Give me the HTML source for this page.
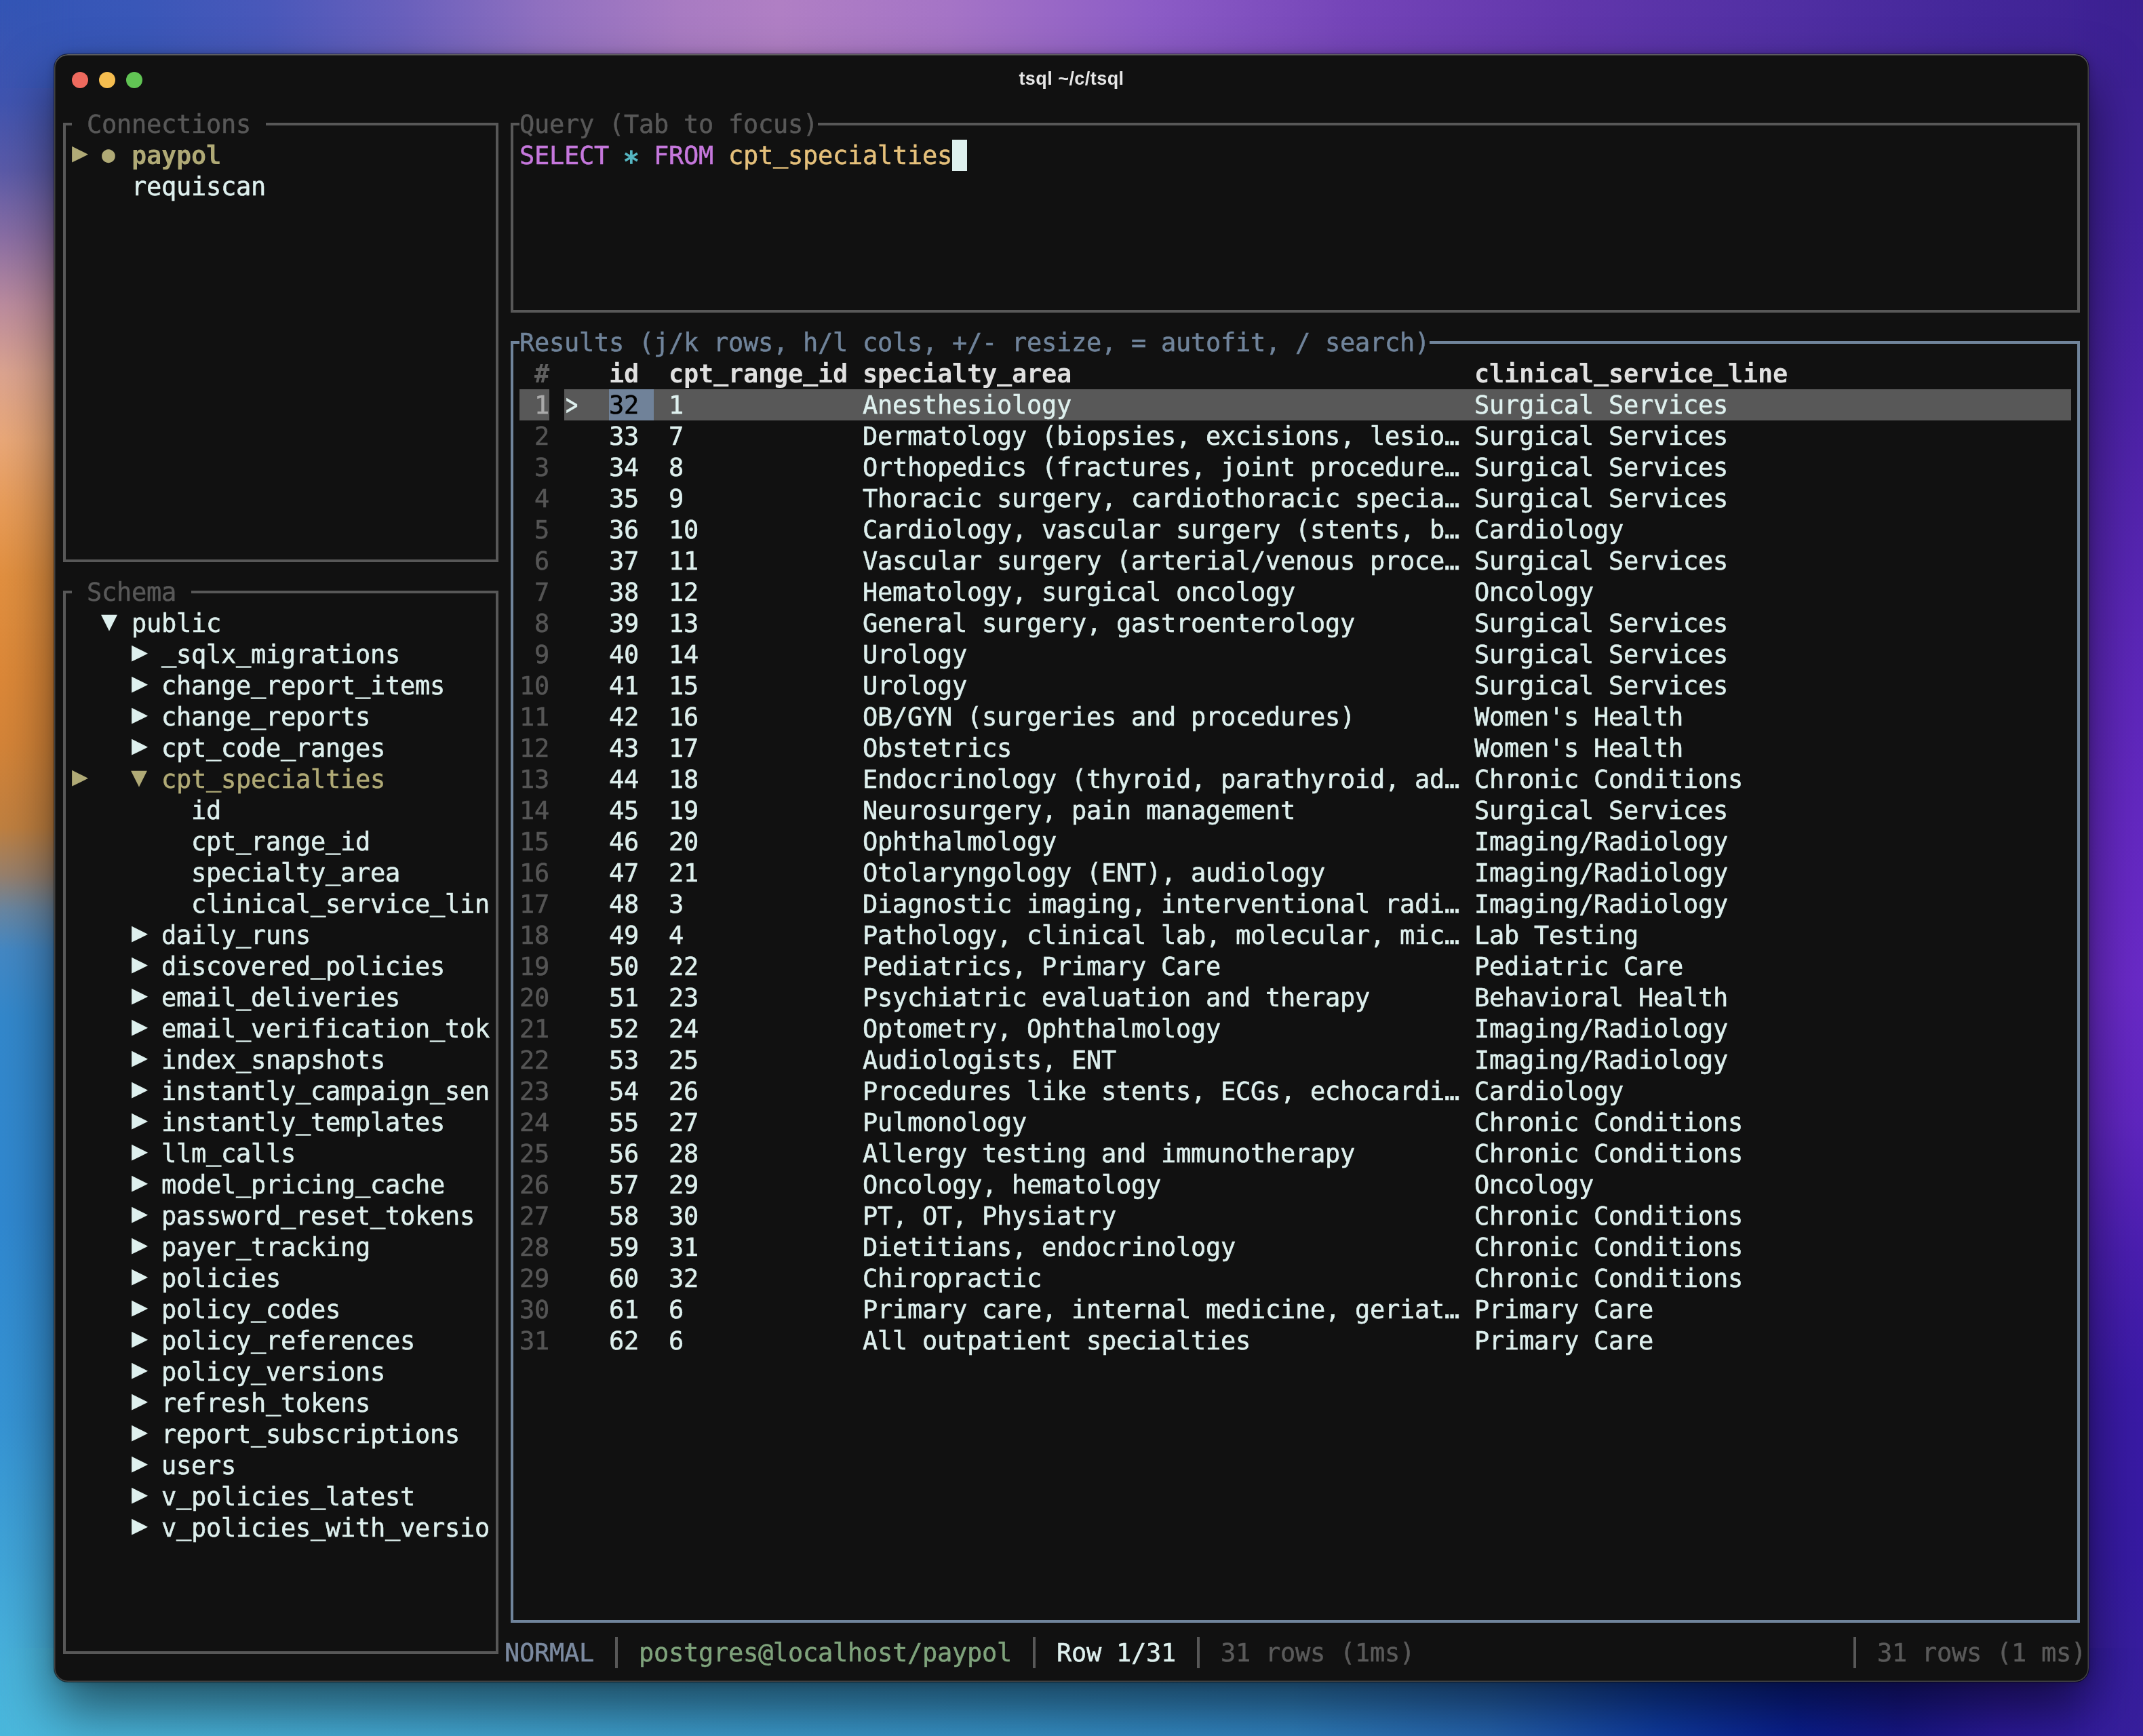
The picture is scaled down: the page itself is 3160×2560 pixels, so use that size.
<!DOCTYPE html>
<html lang="en"><head><meta charset="utf-8"><title>tsql ~/c/tsql</title>
<style>
html,body{margin:0;padding:0}
body{width:3160px;height:2560px;overflow:hidden;position:relative;background:#3a2a9a}
.bg{position:absolute}
#bl{left:0;top:0;width:130px;height:2560px;background:linear-gradient(180deg,#3355b5 0px,#4054b0 150px,#5a5aa8 250px,#8a6ea4 350px,#bc8c9e 450px,#dca490 550px,#eaa878 650px,#e89c58 750px,#e29040 850px,#dc8838 1000px,#d48438 1100px,#c08040 1220px,#98806c 1290px,#6a86a0 1340px,#4488c4 1400px,#3388cc 1500px,#3088d0 1800px,#3694d4 2100px,#40a4d8 2300px,#48b2dc 2450px,#4bb8dc 2560px)}
#br{left:3030px;top:0;width:130px;height:2560px;background:linear-gradient(180deg,#3c2092 0px,#40209a 300px,#4c22a6 600px,#5a26b6 900px,#6428c2 1200px,#6a2ac8 1450px,#6026c0 1650px,#4a1eb0 1850px,#3a1aa6 2050px,#361aa2 2300px,#38209c 2560px)}
#bt{left:0;top:0;width:3160px;height:130px;background:linear-gradient(90deg,#3355b5 0px,#3957b8 200px,#4a58ba 400px,#6a60bc 600px,#9070c0 800px,#a87bc2 1000px,#b07fc4 1150px,#a574c6 1400px,#8c5cc6 1700px,#7444b8 2000px,#6237ac 2300px,#5230a4 2600px,#44279a 2900px,#3c2092 3160px);-webkit-mask-image:linear-gradient(90deg,rgba(0,0,0,0) 0px,#000 110px,#000 3050px,rgba(0,0,0,0) 3160px);mask-image:linear-gradient(90deg,rgba(0,0,0,0) 0px,#000 110px,#000 3050px,rgba(0,0,0,0) 3160px)}
#bb{left:0;top:2430px;width:3160px;height:130px;background:linear-gradient(90deg,#4bb8dc 0px,#45acd6 500px,#3c9ccc 1000px,#3590c6 1500px,#2f80be 1900px,#2462ae 2200px,#0e3aa0 2450px,#0a1e8e 2650px,#161686 2800px,#2a1896 2950px,#341c9e 3160px);-webkit-mask-image:linear-gradient(90deg,rgba(0,0,0,0) 0px,#000 110px,#000 3050px,rgba(0,0,0,0) 3160px);mask-image:linear-gradient(90deg,rgba(0,0,0,0) 0px,#000 110px,#000 3050px,rgba(0,0,0,0) 3160px)}
#win{position:absolute;left:80px;top:80px;width:3000px;height:2400px;background:#111111;border-radius:20px;
 box-shadow:0 0 0 1px rgba(0,0,0,.55), 0 0 16px rgba(0,0,0,.22), 0 40px 80px 0 rgba(0,0,0,.55);overflow:hidden;will-change:transform}
#win:after{content:"";position:absolute;left:0;top:0;right:0;bottom:0;border-radius:20px;box-shadow:inset 0 0 0 1.5px rgba(255,255,255,.22), inset 0 1.5px 0 0 rgba(255,255,255,.18);pointer-events:none}
#win i{position:absolute;display:block}
.tl{position:absolute;top:26px;width:24px;height:24px;border-radius:50%}
#title{position:absolute;left:0;width:3000px;top:16px;height:40px;line-height:40px;text-align:center;
 font:bold 27px/40px "Liberation Sans",sans-serif;letter-spacing:.45px;color:#e6e6e6}
.t,.s{position:absolute;white-space:pre;font-family:"DejaVu Sans Mono","Liberation Mono",monospace;font-size:37px;letter-spacing:-0.2764px;
 line-height:46px;height:46px;color:#def0ee;font-kerning:none;font-variant-ligatures:none;-webkit-text-stroke:.5px currentColor}
.b{font-weight:bold;-webkit-text-stroke:0}
.t{margin-top:1px}
.t u{text-decoration:none;position:relative;top:-3px}
.gt{transform:scale(.82,1.2);transform-origin:11px 24px;-webkit-text-stroke:.3px currentColor}
.star{font-size:41px;letter-spacing:0;margin-left:-1.5px;margin-top:10px;-webkit-text-stroke:1.4px currentColor}
.s{width:22px;letter-spacing:0;-webkit-text-stroke:0}
.tr{font-size:39.9px;margin-top:-5px}
.td{font-size:39.9px;margin-top:-4px;margin-left:-1px}
.dot{font-size:33px;margin-top:-1px;margin-left:0px}
</style></head>
<body>
<div class="bg" id="bl"></div><div class="bg" id="br"></div><div class="bg" id="bt"></div><div class="bg" id="bb"></div>
<div id="win">
<div class="tl" style="left:26px;background:#ee6a5e"></div>
<div class="tl" style="left:66px;background:#f5bd4f"></div>
<div class="tl" style="left:106px;background:#61c454"></div>
<div id="title">tsql ~/c/tsql</div>
<i style="left:13px;top:101px;width:4px;height:648px;background:#585858;"></i>
<i style="left:651px;top:101px;width:4px;height:648px;background:#585858;"></i>
<i style="left:13px;top:745px;width:642px;height:4px;background:#585858;"></i>
<i style="left:13px;top:101px;width:13px;height:4px;background:#585858;"></i>
<i style="left:312px;top:101px;width:343px;height:4px;background:#585858;"></i>
<span class="t" style="left:48px;top:80px;color:#585858;">Connections</span>
<i style="left:13px;top:791px;width:4px;height:1568px;background:#585858;"></i>
<i style="left:651px;top:791px;width:4px;height:1568px;background:#585858;"></i>
<i style="left:13px;top:2355px;width:642px;height:4px;background:#585858;"></i>
<i style="left:13px;top:791px;width:13px;height:4px;background:#585858;"></i>
<i style="left:202px;top:791px;width:453px;height:4px;background:#585858;"></i>
<span class="t" style="left:48px;top:770px;color:#585858;">Schema</span>
<i style="left:673px;top:101px;width:4px;height:280px;background:#585858;"></i>
<i style="left:2983px;top:101px;width:4px;height:280px;background:#585858;"></i>
<i style="left:673px;top:377px;width:2314px;height:4px;background:#585858;"></i>
<i style="left:673px;top:101px;width:13px;height:4px;background:#585858;"></i>
<i style="left:1126px;top:101px;width:1861px;height:4px;background:#585858;"></i>
<span class="t" style="left:686px;top:80px;color:#585858;">Query (Tab to focus)</span>
<i style="left:673px;top:423px;width:4px;height:1890px;background:#70849b;"></i>
<i style="left:2983px;top:423px;width:4px;height:1890px;background:#70849b;"></i>
<i style="left:673px;top:2309px;width:2314px;height:4px;background:#70849b;"></i>
<i style="left:673px;top:423px;width:13px;height:4px;background:#70849b;"></i>
<i style="left:2028px;top:423px;width:959px;height:4px;background:#70849b;"></i>
<span class="t" style="left:686px;top:402px;color:#70849b;">Results (j/k rows, h/l cols, +/- resize, = autofit, / search)</span>
<span class="s tr" style="left:26px;top:126px;color:#b0aa76;">▶</span>
<span class="s dot" style="left:70px;top:126px;color:#b0aa76;">●</span>
<span class="t b" style="left:114px;top:126px;color:#b0aa76;">paypol</span>
<span class="t" style="left:114px;top:172px;">requiscan</span>
<span class="t" style="left:114px;top:816px;">public</span>
<span class="s td" style="left:70px;top:816px;">▼</span>
<span class="s tr" style="left:114px;top:862px;">▶</span>
<span class="t" style="left:158px;top:862px;"><u>_</u>sqlx<u>_</u>migrations</span>
<span class="s tr" style="left:114px;top:908px;">▶</span>
<span class="t" style="left:158px;top:908px;">change<u>_</u>report<u>_</u>items</span>
<span class="s tr" style="left:114px;top:954px;">▶</span>
<span class="t" style="left:158px;top:954px;">change<u>_</u>reports</span>
<span class="s tr" style="left:114px;top:1000px;">▶</span>
<span class="t" style="left:158px;top:1000px;">cpt<u>_</u>code<u>_</u>ranges</span>
<span class="s tr" style="left:26px;top:1046px;color:#b0aa76;">▶</span>
<span class="s td" style="left:114px;top:1046px;color:#b0aa76;">▼</span>
<span class="t" style="left:158px;top:1046px;color:#b0aa76;">cpt<u>_</u>specialties</span>
<span class="t" style="left:202px;top:1092px;">id</span>
<span class="t" style="left:202px;top:1138px;">cpt<u>_</u>range<u>_</u>id</span>
<span class="t" style="left:202px;top:1184px;">specialty<u>_</u>area</span>
<span class="t" style="left:202px;top:1230px;">clinical<u>_</u>service<u>_</u>lin</span>
<span class="s tr" style="left:114px;top:1276px;">▶</span>
<span class="t" style="left:158px;top:1276px;">daily<u>_</u>runs</span>
<span class="s tr" style="left:114px;top:1322px;">▶</span>
<span class="t" style="left:158px;top:1322px;">discovered<u>_</u>policies</span>
<span class="s tr" style="left:114px;top:1368px;">▶</span>
<span class="t" style="left:158px;top:1368px;">email<u>_</u>deliveries</span>
<span class="s tr" style="left:114px;top:1414px;">▶</span>
<span class="t" style="left:158px;top:1414px;">email<u>_</u>verification<u>_</u>tok</span>
<span class="s tr" style="left:114px;top:1460px;">▶</span>
<span class="t" style="left:158px;top:1460px;">index<u>_</u>snapshots</span>
<span class="s tr" style="left:114px;top:1506px;">▶</span>
<span class="t" style="left:158px;top:1506px;">instantly<u>_</u>campaign<u>_</u>sen</span>
<span class="s tr" style="left:114px;top:1552px;">▶</span>
<span class="t" style="left:158px;top:1552px;">instantly<u>_</u>templates</span>
<span class="s tr" style="left:114px;top:1598px;">▶</span>
<span class="t" style="left:158px;top:1598px;">llm<u>_</u>calls</span>
<span class="s tr" style="left:114px;top:1644px;">▶</span>
<span class="t" style="left:158px;top:1644px;">model<u>_</u>pricing<u>_</u>cache</span>
<span class="s tr" style="left:114px;top:1690px;">▶</span>
<span class="t" style="left:158px;top:1690px;">password<u>_</u>reset<u>_</u>tokens</span>
<span class="s tr" style="left:114px;top:1736px;">▶</span>
<span class="t" style="left:158px;top:1736px;">payer<u>_</u>tracking</span>
<span class="s tr" style="left:114px;top:1782px;">▶</span>
<span class="t" style="left:158px;top:1782px;">policies</span>
<span class="s tr" style="left:114px;top:1828px;">▶</span>
<span class="t" style="left:158px;top:1828px;">policy<u>_</u>codes</span>
<span class="s tr" style="left:114px;top:1874px;">▶</span>
<span class="t" style="left:158px;top:1874px;">policy<u>_</u>references</span>
<span class="s tr" style="left:114px;top:1920px;">▶</span>
<span class="t" style="left:158px;top:1920px;">policy<u>_</u>versions</span>
<span class="s tr" style="left:114px;top:1966px;">▶</span>
<span class="t" style="left:158px;top:1966px;">refresh<u>_</u>tokens</span>
<span class="s tr" style="left:114px;top:2012px;">▶</span>
<span class="t" style="left:158px;top:2012px;">report<u>_</u>subscriptions</span>
<span class="s tr" style="left:114px;top:2058px;">▶</span>
<span class="t" style="left:158px;top:2058px;">users</span>
<span class="s tr" style="left:114px;top:2104px;">▶</span>
<span class="t" style="left:158px;top:2104px;">v<u>_</u>policies<u>_</u>latest</span>
<span class="s tr" style="left:114px;top:2150px;">▶</span>
<span class="t" style="left:158px;top:2150px;">v<u>_</u>policies<u>_</u>with<u>_</u>versio</span>
<span class="t" style="left:686px;top:126px;color:#c678dd;">SELECT</span>
<span class="t star" style="left:840px;top:126px;color:#56b6c2;">*</span>
<span class="t" style="left:884px;top:126px;color:#c678dd;">FROM</span>
<span class="t" style="left:994px;top:126px;color:#e5c07b;">cpt<u>_</u>specialties</span>
<i style="left:1324px;top:126px;width:22px;height:46px;background:#def0ee;"></i>
<span class="t b" style="left:708px;top:448px;color:#606060;">#</span>
<span class="t b" style="left:818px;top:448px;color:#e0e0e0;">id</span>
<span class="t b" style="left:906px;top:448px;color:#e0e0e0;">cpt<u>_</u>range<u>_</u>id</span>
<span class="t b" style="left:1192px;top:448px;color:#e0e0e0;">specialty<u>_</u>area</span>
<span class="t b" style="left:2094px;top:448px;color:#e0e0e0;">clinical<u>_</u>service<u>_</u>line</span>
<i style="left:686px;top:494px;width:44px;height:46px;background:#585858;"></i>
<i style="left:752px;top:494px;width:2222px;height:46px;background:#585858;"></i>
<i style="left:818px;top:494px;width:66px;height:46px;background:#708299;"></i>
<span class="t" style="left:708px;top:494px;color:#aaaaaa;">1</span>
<span class="t gt" style="left:752px;top:494px;">&gt;</span>
<span class="t" style="left:818px;top:494px;color:#000000;">32</span>
<span class="t" style="left:906px;top:494px;">1</span>
<span class="t" style="left:1192px;top:494px;">Anesthesiology</span>
<span class="t" style="left:2094px;top:494px;">Surgical Services</span>
<span class="t" style="left:708px;top:540px;color:#555555;">2</span>
<span class="t" style="left:818px;top:540px;">33</span>
<span class="t" style="left:906px;top:540px;">7</span>
<span class="t" style="left:1192px;top:540px;">Dermatology (biopsies, excisions, lesio…</span>
<span class="t" style="left:2094px;top:540px;">Surgical Services</span>
<span class="t" style="left:708px;top:586px;color:#555555;">3</span>
<span class="t" style="left:818px;top:586px;">34</span>
<span class="t" style="left:906px;top:586px;">8</span>
<span class="t" style="left:1192px;top:586px;">Orthopedics (fractures, joint procedure…</span>
<span class="t" style="left:2094px;top:586px;">Surgical Services</span>
<span class="t" style="left:708px;top:632px;color:#555555;">4</span>
<span class="t" style="left:818px;top:632px;">35</span>
<span class="t" style="left:906px;top:632px;">9</span>
<span class="t" style="left:1192px;top:632px;">Thoracic surgery, cardiothoracic specia…</span>
<span class="t" style="left:2094px;top:632px;">Surgical Services</span>
<span class="t" style="left:708px;top:678px;color:#555555;">5</span>
<span class="t" style="left:818px;top:678px;">36</span>
<span class="t" style="left:906px;top:678px;">10</span>
<span class="t" style="left:1192px;top:678px;">Cardiology, vascular surgery (stents, b…</span>
<span class="t" style="left:2094px;top:678px;">Cardiology</span>
<span class="t" style="left:708px;top:724px;color:#555555;">6</span>
<span class="t" style="left:818px;top:724px;">37</span>
<span class="t" style="left:906px;top:724px;">11</span>
<span class="t" style="left:1192px;top:724px;">Vascular surgery (arterial/venous proce…</span>
<span class="t" style="left:2094px;top:724px;">Surgical Services</span>
<span class="t" style="left:708px;top:770px;color:#555555;">7</span>
<span class="t" style="left:818px;top:770px;">38</span>
<span class="t" style="left:906px;top:770px;">12</span>
<span class="t" style="left:1192px;top:770px;">Hematology, surgical oncology</span>
<span class="t" style="left:2094px;top:770px;">Oncology</span>
<span class="t" style="left:708px;top:816px;color:#555555;">8</span>
<span class="t" style="left:818px;top:816px;">39</span>
<span class="t" style="left:906px;top:816px;">13</span>
<span class="t" style="left:1192px;top:816px;">General surgery, gastroenterology</span>
<span class="t" style="left:2094px;top:816px;">Surgical Services</span>
<span class="t" style="left:708px;top:862px;color:#555555;">9</span>
<span class="t" style="left:818px;top:862px;">40</span>
<span class="t" style="left:906px;top:862px;">14</span>
<span class="t" style="left:1192px;top:862px;">Urology</span>
<span class="t" style="left:2094px;top:862px;">Surgical Services</span>
<span class="t" style="left:686px;top:908px;color:#555555;">10</span>
<span class="t" style="left:818px;top:908px;">41</span>
<span class="t" style="left:906px;top:908px;">15</span>
<span class="t" style="left:1192px;top:908px;">Urology</span>
<span class="t" style="left:2094px;top:908px;">Surgical Services</span>
<span class="t" style="left:686px;top:954px;color:#555555;">11</span>
<span class="t" style="left:818px;top:954px;">42</span>
<span class="t" style="left:906px;top:954px;">16</span>
<span class="t" style="left:1192px;top:954px;">OB/GYN (surgeries and procedures)</span>
<span class="t" style="left:2094px;top:954px;">Women's Health</span>
<span class="t" style="left:686px;top:1000px;color:#555555;">12</span>
<span class="t" style="left:818px;top:1000px;">43</span>
<span class="t" style="left:906px;top:1000px;">17</span>
<span class="t" style="left:1192px;top:1000px;">Obstetrics</span>
<span class="t" style="left:2094px;top:1000px;">Women's Health</span>
<span class="t" style="left:686px;top:1046px;color:#555555;">13</span>
<span class="t" style="left:818px;top:1046px;">44</span>
<span class="t" style="left:906px;top:1046px;">18</span>
<span class="t" style="left:1192px;top:1046px;">Endocrinology (thyroid, parathyroid, ad…</span>
<span class="t" style="left:2094px;top:1046px;">Chronic Conditions</span>
<span class="t" style="left:686px;top:1092px;color:#555555;">14</span>
<span class="t" style="left:818px;top:1092px;">45</span>
<span class="t" style="left:906px;top:1092px;">19</span>
<span class="t" style="left:1192px;top:1092px;">Neurosurgery, pain management</span>
<span class="t" style="left:2094px;top:1092px;">Surgical Services</span>
<span class="t" style="left:686px;top:1138px;color:#555555;">15</span>
<span class="t" style="left:818px;top:1138px;">46</span>
<span class="t" style="left:906px;top:1138px;">20</span>
<span class="t" style="left:1192px;top:1138px;">Ophthalmology</span>
<span class="t" style="left:2094px;top:1138px;">Imaging/Radiology</span>
<span class="t" style="left:686px;top:1184px;color:#555555;">16</span>
<span class="t" style="left:818px;top:1184px;">47</span>
<span class="t" style="left:906px;top:1184px;">21</span>
<span class="t" style="left:1192px;top:1184px;">Otolaryngology (ENT), audiology</span>
<span class="t" style="left:2094px;top:1184px;">Imaging/Radiology</span>
<span class="t" style="left:686px;top:1230px;color:#555555;">17</span>
<span class="t" style="left:818px;top:1230px;">48</span>
<span class="t" style="left:906px;top:1230px;">3</span>
<span class="t" style="left:1192px;top:1230px;">Diagnostic imaging, interventional radi…</span>
<span class="t" style="left:2094px;top:1230px;">Imaging/Radiology</span>
<span class="t" style="left:686px;top:1276px;color:#555555;">18</span>
<span class="t" style="left:818px;top:1276px;">49</span>
<span class="t" style="left:906px;top:1276px;">4</span>
<span class="t" style="left:1192px;top:1276px;">Pathology, clinical lab, molecular, mic…</span>
<span class="t" style="left:2094px;top:1276px;">Lab Testing</span>
<span class="t" style="left:686px;top:1322px;color:#555555;">19</span>
<span class="t" style="left:818px;top:1322px;">50</span>
<span class="t" style="left:906px;top:1322px;">22</span>
<span class="t" style="left:1192px;top:1322px;">Pediatrics, Primary Care</span>
<span class="t" style="left:2094px;top:1322px;">Pediatric Care</span>
<span class="t" style="left:686px;top:1368px;color:#555555;">20</span>
<span class="t" style="left:818px;top:1368px;">51</span>
<span class="t" style="left:906px;top:1368px;">23</span>
<span class="t" style="left:1192px;top:1368px;">Psychiatric evaluation and therapy</span>
<span class="t" style="left:2094px;top:1368px;">Behavioral Health</span>
<span class="t" style="left:686px;top:1414px;color:#555555;">21</span>
<span class="t" style="left:818px;top:1414px;">52</span>
<span class="t" style="left:906px;top:1414px;">24</span>
<span class="t" style="left:1192px;top:1414px;">Optometry, Ophthalmology</span>
<span class="t" style="left:2094px;top:1414px;">Imaging/Radiology</span>
<span class="t" style="left:686px;top:1460px;color:#555555;">22</span>
<span class="t" style="left:818px;top:1460px;">53</span>
<span class="t" style="left:906px;top:1460px;">25</span>
<span class="t" style="left:1192px;top:1460px;">Audiologists, ENT</span>
<span class="t" style="left:2094px;top:1460px;">Imaging/Radiology</span>
<span class="t" style="left:686px;top:1506px;color:#555555;">23</span>
<span class="t" style="left:818px;top:1506px;">54</span>
<span class="t" style="left:906px;top:1506px;">26</span>
<span class="t" style="left:1192px;top:1506px;">Procedures like stents, ECGs, echocardi…</span>
<span class="t" style="left:2094px;top:1506px;">Cardiology</span>
<span class="t" style="left:686px;top:1552px;color:#555555;">24</span>
<span class="t" style="left:818px;top:1552px;">55</span>
<span class="t" style="left:906px;top:1552px;">27</span>
<span class="t" style="left:1192px;top:1552px;">Pulmonology</span>
<span class="t" style="left:2094px;top:1552px;">Chronic Conditions</span>
<span class="t" style="left:686px;top:1598px;color:#555555;">25</span>
<span class="t" style="left:818px;top:1598px;">56</span>
<span class="t" style="left:906px;top:1598px;">28</span>
<span class="t" style="left:1192px;top:1598px;">Allergy testing and immunotherapy</span>
<span class="t" style="left:2094px;top:1598px;">Chronic Conditions</span>
<span class="t" style="left:686px;top:1644px;color:#555555;">26</span>
<span class="t" style="left:818px;top:1644px;">57</span>
<span class="t" style="left:906px;top:1644px;">29</span>
<span class="t" style="left:1192px;top:1644px;">Oncology, hematology</span>
<span class="t" style="left:2094px;top:1644px;">Oncology</span>
<span class="t" style="left:686px;top:1690px;color:#555555;">27</span>
<span class="t" style="left:818px;top:1690px;">58</span>
<span class="t" style="left:906px;top:1690px;">30</span>
<span class="t" style="left:1192px;top:1690px;">PT, OT, Physiatry</span>
<span class="t" style="left:2094px;top:1690px;">Chronic Conditions</span>
<span class="t" style="left:686px;top:1736px;color:#555555;">28</span>
<span class="t" style="left:818px;top:1736px;">59</span>
<span class="t" style="left:906px;top:1736px;">31</span>
<span class="t" style="left:1192px;top:1736px;">Dietitians, endocrinology</span>
<span class="t" style="left:2094px;top:1736px;">Chronic Conditions</span>
<span class="t" style="left:686px;top:1782px;color:#555555;">29</span>
<span class="t" style="left:818px;top:1782px;">60</span>
<span class="t" style="left:906px;top:1782px;">32</span>
<span class="t" style="left:1192px;top:1782px;">Chiropractic</span>
<span class="t" style="left:2094px;top:1782px;">Chronic Conditions</span>
<span class="t" style="left:686px;top:1828px;color:#555555;">30</span>
<span class="t" style="left:818px;top:1828px;">61</span>
<span class="t" style="left:906px;top:1828px;">6</span>
<span class="t" style="left:1192px;top:1828px;">Primary care, internal medicine, geriat…</span>
<span class="t" style="left:2094px;top:1828px;">Primary Care</span>
<span class="t" style="left:686px;top:1874px;color:#555555;">31</span>
<span class="t" style="left:818px;top:1874px;">62</span>
<span class="t" style="left:906px;top:1874px;">6</span>
<span class="t" style="left:1192px;top:1874px;">All outpatient specialties</span>
<span class="t" style="left:2094px;top:1874px;">Primary Care</span>
<span class="t" style="left:664px;top:2334px;color:#7b8aa0;">NORMAL</span>
<i style="left:827px;top:2334px;width:4px;height:46px;background:#585858;"></i>
<span class="t" style="left:862px;top:2334px;color:#7fa37c;">postgres@localhost/paypol</span>
<i style="left:1443px;top:2334px;width:4px;height:46px;background:#585858;"></i>
<span class="t" style="left:1478px;top:2334px;">Row 1/31</span>
<i style="left:1685px;top:2334px;width:4px;height:46px;background:#585858;"></i>
<span class="t" style="left:1720px;top:2334px;color:#5a5a5a;">31 rows (1ms)</span>
<i style="left:2653px;top:2334px;width:4px;height:46px;background:#585858;"></i>
<span class="t" style="left:2688px;top:2334px;color:#5a5a5a;">31 rows (1 ms)</span>
</div>
</body></html>
